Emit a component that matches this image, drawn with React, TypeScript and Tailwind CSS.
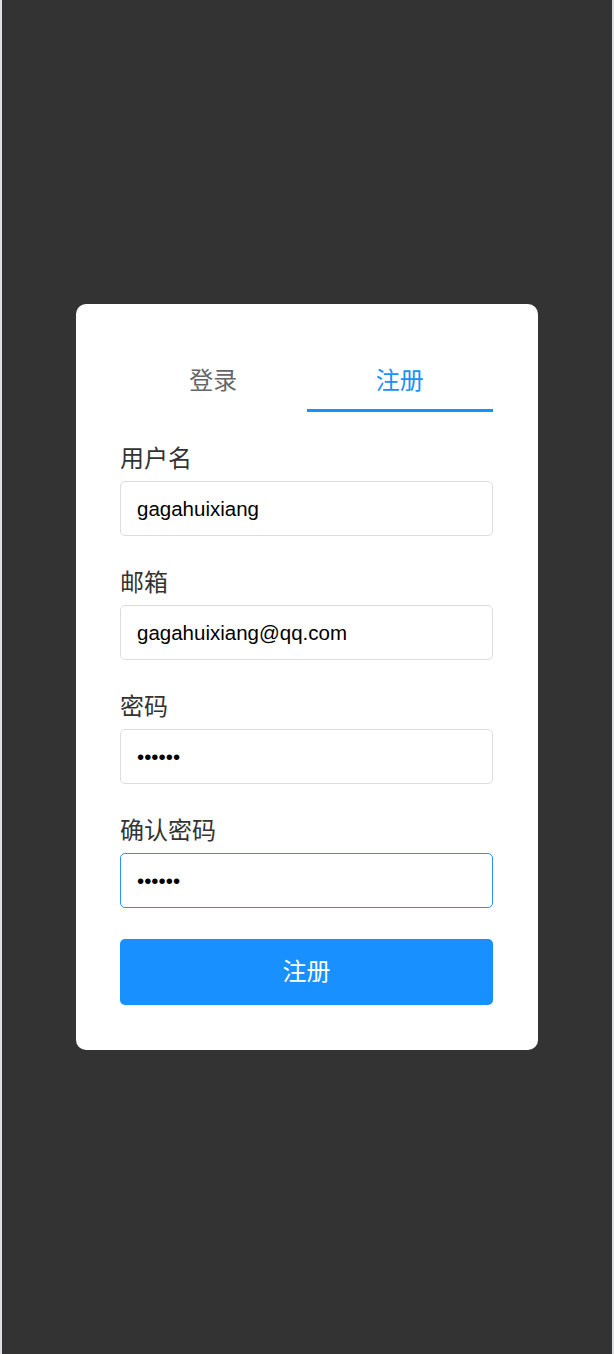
import { useState } from 'react'

const font = { fontFamily: '"Liberation Sans", "Noto Sans CJK SC", sans-serif' }

function Field({ label, value, type = 'text', focused = false, last = false }: { label: string; value: string; type?: string; focused?: boolean; last?: boolean }) {
  const [v, setV] = useState(value)
  return (
    <div className={last ? '' : 'mb-[32px]'}>
      <label className="block text-[24px] leading-[30px] text-[#333] mb-[7px]">{label}</label>
      <input
        type={type}
        value={v}
        autoFocus={focused}
        onChange={(e) => setV(e.target.value)}
        className={`block w-full h-[55px] px-[16px] text-[20.5px] text-black bg-white rounded-[5px] border outline-none ${
          focused ? 'border-[#2b93f5]' : 'border-[#dcdcdc]'
        }`}
      />
    </div>
  )
}

export default function App() {
  const [tab, setTab] = useState<'login' | 'register'>('register')

  return (
    <div style={font} className="min-h-[1354px] bg-[#333333] border-x-2 border-[#dde2e9] flex items-center justify-center">
      <div className="w-[462px] bg-white rounded-[10px] pl-[44px] pr-[45px] pt-[44px] pb-[45px]">
        <div className="flex mb-[32px]">
          <button
            onClick={() => setTab('login')}
            className={`flex-1 pt-[16px] pb-[12px] text-[24px] leading-[33px] border-b-[3px] ${
              tab === 'login' ? 'text-[#1890ff] border-[#1890ff]' : 'text-[#666] border-transparent'
            }`}
          >
            登录
          </button>
          <button
            onClick={() => setTab('register')}
            className={`flex-1 pt-[16px] pb-[12px] text-[24px] leading-[33px] border-b-[3px] ${
              tab === 'register' ? 'text-[#1890ff] border-[#1890ff]' : 'text-[#666] border-transparent'
            }`}
          >
            注册
          </button>
        </div>

        <Field label="用户名" value="gagahuixiang" />
        <Field label="邮箱" value="gagahuixiang@qq.com" />
        <Field label="密码" value="123456" type="password" />
        <Field label="确认密码" value="123456" type="password" focused last />

        <button className="block w-full h-[66px] mt-[31px] bg-[#1890ff] text-white text-[24px] rounded-[5px]">
          注册
        </button>
      </div>
    </div>
  )
}
